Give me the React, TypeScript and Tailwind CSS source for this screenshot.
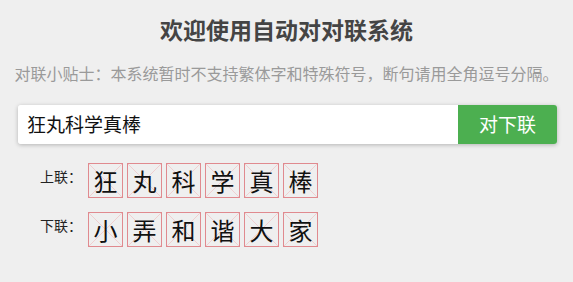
const upper = ["狂", "丸", "科", "学", "真", "棒"];
const lower = ["小", "弄", "和", "谐", "大", "家"];

function CharBox({ ch }: { ch: string }) {
  return (
    <div className="relative w-[35px] h-[35px] border border-[#e08a8f] flex items-center justify-center">
      <svg className="absolute inset-0 w-full h-full" viewBox="0 0 35 35" preserveAspectRatio="none">
        <line x1="0" y1="0" x2="35" y2="35" stroke="#f0c4c6" strokeWidth="0.8" />
        <line x1="35" y1="0" x2="0" y2="35" stroke="#f0c4c6" strokeWidth="0.8" />
      </svg>
      <span className="relative text-[24px] leading-none text-[#111]">{ch}</span>
    </div>
  );
}

function Row({ label, chars }: { label: string; chars: string[] }) {
  return (
    <div className="flex items-start">
      <div className="w-[48px] pt-[6px] text-[14px] text-[#222] leading-none">{label}</div>
      <div className="flex gap-[4px]">
        {chars.map((c, i) => (
          <CharBox key={i} ch={c} />
        ))}
      </div>
    </div>
  );
}

export default function App() {
  return (
    <div
      className="w-[573px] h-[282px] bg-[#efefef] overflow-hidden"
      style={{ fontFamily: '"Microsoft YaHei", "Noto Sans CJK SC", sans-serif' }}
    >
      <h1 className="pt-[13px] text-center text-[23px] font-bold leading-[32px] text-[#444]">
        欢迎使用自动对对联系统
      </h1>
      <p className="mt-[16px] text-center text-[16px] leading-[24px] text-[#9a9a9a]">
        对联小贴士：本系统暂时不支持繁体字和特殊符号，断句请用全角逗号分隔。
      </p>
      <div className="mt-[20px] ml-[18px] w-[539px] h-[39px] flex rounded-[3px] shadow-[0_1px_4px_rgba(0,0,0,0.25)]">
        <div className="flex-1 bg-white flex items-center pl-[9px] text-[19px] text-[#111] rounded-l-[3px]">
          狂丸科学真棒
        </div>
        <button className="w-[99px] bg-[#4caf50] text-white text-[19px] rounded-r-[3px]">对下联</button>
      </div>
      <div className="mt-[19px] ml-[40px] flex flex-col gap-[14px]">
        <Row label="上联：" chars={upper} />
        <Row label="下联：" chars={lower} />
      </div>
    </div>
  );
}
